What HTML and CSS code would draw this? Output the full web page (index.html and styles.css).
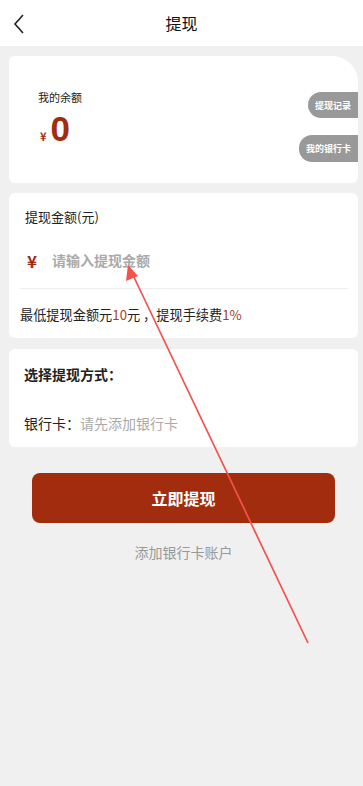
FILE: index.html
```html
<!DOCTYPE html>
<html lang="zh-CN">
<head>
    <meta charset="UTF-8">
    <meta name="viewport" content="width=device-width, initial-scale=1.0">
    <title>提现</title>
    <link rel="stylesheet" href="styles.css">
</head>
<body>
    <div class="header">
        <svg class="back" width="12" height="20" viewBox="0 0 12 20"><path d="M10 1 L2 10 L10 19" fill="none" stroke="#222" stroke-width="1.6"/></svg>
        <div class="title">提现</div>
    </div>

    <div class="main">
        <div class="card balance">
            <div class="balance-label">我的余额</div>
            <div class="balance-num"><span class="yen">¥</span><span class="zero">0</span></div>
            <div class="pill pill-record">提现记录</div>
            <div class="pill pill-card">我的银行卡</div>
        </div>

        <div class="card amount">
            <div class="amount-label">提现金额(元)</div>
            <div class="amount-input">
                <span class="amount-yen">¥</span>
                <span class="placeholder">请输入提现金额</span>
            </div>
            <div class="divider"></div>
            <div class="fee">最低提现金额元<span class="hl">10</span>元 ，提现手续费<span class="hl">1%</span></div>
        </div>

        <div class="card method">
            <div class="method-title">选择提现方式：</div>
            <div class="method-row">银行卡：<span class="muted">请先添加银行卡</span></div>
        </div>

        <button class="submit">立即提现</button>
        <div class="add-link">添加银行卡账户</div>
    </div>

    <!-- annotation arrow -->
    <svg class="arrow" width="363" height="786" viewBox="0 0 363 786">
        <line x1="308" y1="643" x2="132" y2="273" stroke="#f4524d" stroke-width="1.7"/>
        <polygon points="128,265 126,281 138,276" fill="#f4524d"/>
    </svg>
</body>
</html>
```

FILE: styles.css
```css
body {
    margin: 0;
    background: #f0f0f0;
    font-family: "Noto Sans CJK SC", "Liberation Sans", sans-serif;
    color: #222;
    min-height: 786px;
    position: relative;
}

/* top bar */
.header {
    height: 46px;
    background: #fff;
    display: flex;
    align-items: center;
    justify-content: center;
    position: relative;
}
.back {
    position: absolute;
    left: 13px;
    top: 14px;
}
.title {
    font-size: 16px;
    color: #111;
}

.main {
    padding: 10px 5px 0 9px;
    display: flex;
    flex-direction: column;
    gap: 10px;
}

.card {
    background: #fff;
    border-radius: 6px;
    position: relative;
}

/* balance card */
.balance {
    height: 127px;
    border-top-right-radius: 26px;
    padding: 33px 0 0 29px;
    box-sizing: border-box;
}
.balance-label {
    font-size: 11px;
    line-height: 16px;
}
.balance-num {
    display: flex;
    align-items: baseline;
    margin-top: 4px;
    padding-left: 2px;
    color: #a12d0e;
    font-weight: bold;
}
.yen {
    font-size: 11px;
    margin-right: 4px;
}
.zero {
    font-family: "Liberation Sans", sans-serif;
    font-size: 35px;
    line-height: 40px;
}
.pill {
    position: absolute;
    right: 0;
    background: #999;
    color: #fff;
    font-size: 9px;
    font-weight: bold;
    display: flex;
    align-items: center;
    justify-content: center;
    border-radius: 13px 0 0 13px;
    height: 26px;
}
.pill-record {
    top: 36px;
    width: 50px;
}
.pill-card {
    top: 79px;
    width: 59px;
    height: 27px;
}

/* amount card */
.amount {
    height: 145px;
    padding-top: 15px;
    box-sizing: border-box;
}
.amount-label {
    font-size: 13px;
    line-height: 18px;
    padding-left: 16px;
}
.amount-input {
    display: flex;
    align-items: center;
    margin-top: 24px;
    padding-left: 18px;
    height: 20px;
}
.amount-yen {
    color: #a12d0e;
    font-weight: bold;
    font-size: 17px;
    width: 25px;
}
.placeholder {
    color: #aaa;
    font-size: 14px;
    font-weight: bold;
}
.divider {
    height: 1px;
    background: #eee;
    margin: 18px 10px 0 11px;
}
.fee {
    font-size: 13.2px;
    line-height: 18px;
    padding-left: 11px;
    margin-top: 17px;
}
.hl {
    color: #a8401b;
}

/* method card */
.method {
    height: 98px;
    padding: 16px 0 0 15px;
    box-sizing: border-box;
    margin-top: 1px;
}
.method-title {
    font-size: 14px;
    font-weight: bold;
    line-height: 18px;
}
.method-row {
    font-size: 14px;
    line-height: 18px;
    margin-top: 31px;
}
.muted {
    color: #aaa;
}

.submit {
    margin: 16px 23px 0 23px;
    height: 50px;
    border: none;
    border-radius: 8px;
    background: #a12d0e;
    color: #fff;
    font-family: inherit;
    font-size: 16px;
    font-weight: bold;
}
.add-link {
    text-align: center;
    color: #999;
    font-size: 14px;
    line-height: 20px;
    margin-top: 9px;
}

.arrow {
    position: absolute;
    left: 0;
    top: 0;
    pointer-events: none;
}
```
